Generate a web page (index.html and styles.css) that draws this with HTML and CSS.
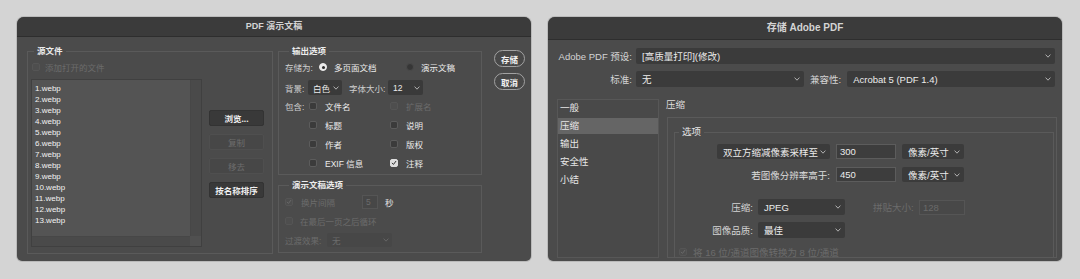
FILE: index.html
```html
<!DOCTYPE html>
<html lang="zh-CN">
<head>
<meta charset="utf-8">
<title>PDF 对话框</title>
<link rel="stylesheet" href="styles.css">
</head>
<body>
<div class="page">

  <section class="dlg">
    <header class="titlebar tb-left">PDF 演示文稿</header>
    <div class="left-body">
      <fieldset class="grp grp-src">
        <legend class="lg lg-src">源文件</legend>
        <div class="src-add dis">
          <span class="cb cb-dis"></span><span>添加打开的文件</span>
        </div>
        <div class="src-main">
          <div class="filelist">
            <ul class="files">
              <li>1.webp</li><li>2.webp</li><li>3.webp</li><li>4.webp</li><li>5.webp</li>
              <li>6.webp</li><li>7.webp</li><li>8.webp</li><li>9.webp</li><li>10.webp</li>
              <li>11.webp</li><li>12.webp</li><li>13.webp</li>
            </ul>
            <div class="vscroll"></div>
            <div class="hscroll"></div>
            <div class="corner"></div>
          </div>
          <div class="btncol">
            <button class="btn">浏览...</button>
            <button class="btn btn-dis">复制</button>
            <button class="btn btn-dis">移去</button>
            <button class="btn">按名称排序</button>
          </div>
        </div>
      </fieldset>

      <div class="optcol">
        <fieldset class="grp grp-out">
          <legend class="lg lg-out">输出选项</legend>
          <div class="r1">
            <span class="olabel w34">存储为:</span>
            <span class="opt w87"><span class="radio on"></span><span class="val">多页面文档</span></span>
            <span class="opt"><span class="radio"></span><span class="val">演示文稿</span></span>
          </div>
          <div class="r2">
            <span class="olabel w23">背景:</span>
            <span class="lsel w34"><span class="val">白色</span><svg class="chev" viewBox="0 0 6 4"><path d="M0.6 0.6 L3 3.2 L5.4 0.6"/></svg></span>
            <span class="olabel w39 ml7">字体大小:</span>
            <span class="lsel w35"><span class="val">12</span><svg class="chev" viewBox="0 0 6 4"><path d="M0.6 0.6 L3 3.2 L5.4 0.6"/></svg></span>
          </div>
          <div class="inc-grid">
            <span class="olabel">包含:</span>
            <span class="ck"><span class="cb"></span><span class="val">文件名</span></span>
            <span class="ck dis"><span class="cb cb-dis"></span><span>扩展名</span></span>
            <span></span>
            <span class="ck"><span class="cb"></span><span class="val">标题</span></span>
            <span class="ck"><span class="cb"></span><span class="val">说明</span></span>
            <span></span>
            <span class="ck"><span class="cb"></span><span class="val">作者</span></span>
            <span class="ck"><span class="cb"></span><span class="val">版权</span></span>
            <span></span>
            <span class="ck"><span class="cb"></span><span class="val">EXIF 信息</span></span>
            <span class="ck"><span class="cb cb-on"><svg viewBox="0 0 8 8"><path d="M1.6 4.2 L3.3 5.9 L6.4 1.8"/></svg></span><span class="val">注释</span></span>
          </div>
        </fieldset>

        <fieldset class="grp grp-pres">
          <legend class="lg lg-out">演示文稿选项</legend>
          <div class="pA dis">
            <span class="cb cb-dis"><svg viewBox="0 0 8 8"><path d="M1.6 4.2 L3.3 5.9 L6.4 1.8"/></svg></span>
            <span class="w61">换片间隔</span>
            <span class="linput">5</span>
            <span class="sec">秒</span>
          </div>
          <div class="pB dis">
            <span class="cb cb-dis"></span><span>在最后一页之后循环</span>
          </div>
          <div class="pC dis">
            <span class="w42">过渡效果:</span>
            <span class="lsel lsel-dis w65"><span>无</span><svg class="chev" viewBox="0 0 6 4"><path d="M0.6 0.6 L3 3.2 L5.4 0.6"/></svg></span>
          </div>
        </fieldset>
      </div>

      <div class="actcol">
        <button class="pill">存储</button>
        <button class="pill">取消</button>
      </div>
    </div>
  </section>

  <section class="dlg">
    <header class="titlebar tb-right">存储 Adobe PDF</header>
    <div class="right-body">
      <div class="frow">
        <span class="flabel">Adobe PDF 预设:</span>
        <span class="sel grow"><span>[高质量打印](修改)</span><svg class="chev" viewBox="0 0 6 4"><path d="M0.6 0.6 L3 3.2 L5.4 0.6"/></svg></span>
      </div>
      <div class="frow">
        <span class="flabel">标准:</span>
        <span class="sel w168"><span>无</span><svg class="chev" viewBox="0 0 6 4"><path d="M0.6 0.6 L3 3.2 L5.4 0.6"/></svg></span>
        <span class="flabel2">兼容性:</span>
        <span class="sel grow"><span>Acrobat 5 (PDF 1.4)</span><svg class="chev" viewBox="0 0 6 4"><path d="M0.6 0.6 L3 3.2 L5.4 0.6"/></svg></span>
      </div>
      <div class="main">
        <nav class="nav">
          <div class="nav-item">一般</div>
          <div class="nav-item on">压缩</div>
          <div class="nav-item">输出</div>
          <div class="nav-item">安全性</div>
          <div class="nav-item">小结</div>
        </nav>
        <div class="panel">
          <div class="panel-title">压缩</div>
          <div class="panel-box">
            <fieldset class="grp grp-opts">
              <legend class="lg lg-opts">选项</legend>
              <div class="res-grid">
                <span class="sel w113 je"><span>双立方缩减像素采样至</span><svg class="chev" viewBox="0 0 6 4"><path d="M0.6 0.6 L3 3.2 L5.4 0.6"/></svg></span>
                <span class="inp">300</span>
                <span class="sel"><span>像素/英寸</span><svg class="chev" viewBox="0 0 6 4"><path d="M0.6 0.6 L3 3.2 L5.4 0.6"/></svg></span>
                <span class="je">若图像分辨率高于:</span>
                <span class="inp">450</span>
                <span class="sel"><span>像素/英寸</span><svg class="chev" viewBox="0 0 6 4"><path d="M0.6 0.6 L3 3.2 L5.4 0.6"/></svg></span>
              </div>
              <div class="crows">
                <div class="crow">
                  <span class="clabel">压缩:</span>
                  <span class="sel w87"><span>JPEG</span><svg class="chev" viewBox="0 0 6 4"><path d="M0.6 0.6 L3 3.2 L5.4 0.6"/></svg></span>
                  <span class="tlabel dis">拼贴大小:</span>
                  <span class="inp inp-dis w46">128</span>
                </div>
                <div class="crow">
                  <span class="clabel">图像品质:</span>
                  <span class="sel w87"><span>最佳</span><svg class="chev" viewBox="0 0 6 4"><path d="M0.6 0.6 L3 3.2 L5.4 0.6"/></svg></span>
                </div>
              </div>
              <div class="conv dis">
                <span class="cb cb-dis"><svg viewBox="0 0 8 8"><path d="M1.6 4.2 L3.3 5.9 L6.4 1.8"/></svg></span>
                <span>将 16 位/通道图像转换为 8 位/通道</span>
              </div>
            </fieldset>
          </div>
        </div>
      </div>
    </div>
  </section>

</div>
</body>
</html>
```

FILE: styles.css
```css
* { box-sizing: border-box; }
html, body { margin: 0; padding: 0; }
body {
  width: 1080px;
  height: 279px;
  overflow: hidden;
  background: #d4d4d4;
  font-family: "Liberation Sans", "Noto Sans CJK SC", sans-serif;
  color: #dcdcdc;
}
.page { display: flex; gap: 17px; padding: 17px 0 0 17px; }

.dlg {
  width: 514px;
  height: 244px;
  background: #4b4b4b;
  border-radius: 7px 7px 5px 5px;
  overflow: hidden;
  display: flex;
  flex-direction: column;
  box-shadow: 0 0 0 1px rgba(0,0,0,0.12);
}
.titlebar {
  flex: none;
  background: #3b3b3b;
  border-bottom: 1px solid #2e2e2e;
  color: #d4d4d4;
  font-weight: bold;
  text-align: center;
}
.tb-left { height: 20px; line-height: 19px; font-size: 9px; }
.tb-right { height: 23px; line-height: 22px; font-size: 10px; }

button { font-family: inherit; margin: 0; padding: 0; }

/* shared */
.grp { margin: 0; padding: 0; border: 1px solid #5a5a5a; min-width: 0; }
.lg { font-weight: bold; color: #ececec; line-height: 12px; padding: 0 3px; }
.dis { color: #6c6c6c; }
.val { color: #ececec; }
.cb {
  flex: none;
  width: 8px; height: 8px;
  border-radius: 2px;
  background: #3b3b3b;
  border: 1px solid #5c5c5c;
  display: flex; align-items: center; justify-content: center;
}
.cb svg { width: 8px; height: 8px; fill: none; stroke-width: 1.3; stroke-linecap: round; stroke-linejoin: round; }
.cb-on { background: #dedede; border-color: #dedede; }
.cb-on svg { stroke: #2a2a2a; }
.cb-dis { background: #4e4e4e; border-color: #555; }
.cb-dis svg { stroke: #6a6a6a; }
.chev { flex: none; width: 6px; height: 4px; fill: none; stroke: #b0b0b0; stroke-width: 1; }

/* ---------- left dialog ---------- */
.left-body {
  display: flex;
  padding: 8px 6px 0 10px;
  font-size: 8.5px;
}
.grp-src { width: 246px; height: 209px; flex: none; }
.lg-src { margin-left: 6px; }
.lg-out { margin-left: 10px; }

.src-add { display: flex; align-items: center; gap: 5px; height: 12px; margin-top: 4px; padding-left: 4px; }
.src-main { display: flex; margin-top: 6px; padding-left: 3px; }
.filelist {
  width: 171px; height: 168px;
  border: 1px solid #404040;
  display: grid;
  grid-template-columns: 1fr 11px;
  grid-template-rows: 1fr 10px;
}
.files {
  list-style: none; margin: 0;
  padding: 3px 0 0 3px;
  background: #545454;
  font-size: 8px; line-height: 11px;
  color: #f2f2f2;
}
.vscroll { background: #4a4a4a; border-left: 1px solid #474747; }
.hscroll { background: #4a4a4a; border-top: 1px solid #474747; }
.corner { background: #505050; }

.btncol { display: flex; flex-direction: column; gap: 8px; width: 55px; margin-left: 7px; padding-top: 31px; }
.btn {
  height: 16px;
  font-size: 8.5px;
  font-weight: bold;
  background: #393939;
  border: 1px solid #333;
  border-radius: 2px;
  color: #efefef;
}
.btn-dis { background: #474747; border-color: #4f4f4f; color: #6d6d6d; font-weight: normal; }

.optcol { display: flex; flex-direction: column; width: 204px; margin-left: 5px; flex: none; }
.grp-out { height: 130px; }
.grp-pres { height: 74px; margin-top: 4px; }
.olabel { color: #cfcfcf; flex: none; }
.w23 { width: 23px; } .w34 { width: 34px; } .w35 { width: 35px; } .w39 { width: 39px; }
.w42 { width: 42px; flex: none; } .w61 { width: 61px; flex: none; } .w65 { width: 65px; }
.w87 { width: 87px; flex: none; } .ml7 { margin-left: 7px; }

.r1 { display: flex; align-items: center; height: 14px; margin-top: 3px; padding-left: 6px; }
.opt { display: flex; align-items: center; gap: 7px; }
.radio {
  flex: none;
  width: 8px; height: 8px; border-radius: 50%;
  background: #363636; border: 1px solid #4a4a4a;
  display: flex; align-items: center; justify-content: center;
}
.radio.on { background: #ececec; border-color: #ececec; }
.radio.on::after { content: ""; width: 3px; height: 3px; border-radius: 50%; background: #2c2c2c; }

.r2 { display: flex; align-items: center; height: 15px; margin-top: 6px; padding-left: 6px; }
.lsel {
  flex: none;
  height: 15px;
  display: flex; align-items: center; justify-content: space-between;
  padding: 0 3px 0 5px;
  background: #3a3a3a;
  border-radius: 2px;
}
.lsel-dis { background: #474747; height: 14px; color: #6c6c6c; }
.lsel-dis .chev { stroke: #666; }

.inc-grid {
  display: grid;
  grid-template-columns: 24px 81px 1fr;
  grid-auto-rows: 19px;
  align-items: center;
  margin-top: 1px;
  padding-left: 6px;
}
.ck { display: flex; align-items: center; gap: 8px; }

.pA { display: flex; align-items: center; height: 16px; margin-top: 3px; padding-left: 6px; gap: 8px; }
.pA .w61 { margin-left: 0; }
.pA { gap: 0; }
.pA .cb { margin-right: 8px; }
.linput {
  width: 16px; height: 14px;
  background: #474747; border: 1px solid #555;
  color: #6c6c6c; padding-left: 3px; line-height: 12px;
}
.sec { margin-left: 7px; color: #e6e6e6; }
.pB { display: flex; align-items: center; gap: 7px; height: 18px; margin-top: 2px; padding-left: 6px; }
.pC { display: flex; align-items: center; height: 14px; margin-top: 3px; padding-left: 6px; }

.actcol { display: flex; flex-direction: column; gap: 6px; width: 31px; margin-left: 12px; padding-top: 5px; flex: none; }
.pill {
  height: 17px;
  border: 1px solid #a2a2a2;
  border-radius: 9px;
  background: #484848;
  color: #f2f2f2;
  font-size: 8.5px;
  font-weight: bold;
}

/* ---------- right dialog ---------- */
.right-body {
  flex: 1; min-height: 0;
  display: flex; flex-direction: column;
  padding: 8px 7px 0 9px;
  font-size: 9.5px;
}
.frow { display: flex; align-items: center; height: 16px; flex: none; }
.frow + .frow { margin-top: 7px; }
.flabel { width: 75px; text-align: right; margin-right: 4px; flex: none; color: #d4d4d4; }
.flabel2 { margin: 0 6px; color: #d4d4d4; }
.sel {
  height: 16px;
  display: flex; align-items: center; justify-content: space-between;
  padding: 0 4px 0 6px;
  background: #3b3b3b;
  border-radius: 2px;
  color: #ececec;
}
.grow { flex: 1; }
.w168 { width: 168px; flex: none; }
.w113 { width: 113px; }

.main { display: flex; flex: 1; min-height: 0; margin: 12px -2px 0 0; padding-bottom: 3px; }
.nav { width: 102px; flex: none; border: 1px solid #575757; background: #494949; }
.nav-item { height: 16px; line-height: 16px; padding-left: 2px; margin-bottom: 2px; color: #e6e6e6; }
.nav-item.on { background: #656565; }
.panel { flex: 1; margin-left: 8px; display: flex; flex-direction: column; min-width: 0; }
.panel-title { height: 18px; line-height: 12px; margin-left: -1px; color: #dedede; flex: none; }
.panel-box { flex: 1; min-height: 0; border: 1px solid #5a5a5a; padding: 8px 2px 0 6px; overflow: hidden; }
.grp-opts { height: 160px; }
.lg-opts { margin-left: 4px; font-weight: normal; color: #e6e6e6; }

.res-grid {
  display: grid;
  grid-template-columns: 155px 60px 62px;
  grid-auto-rows: 15px;
  column-gap: 6px;
  row-gap: 8px;
  align-items: center;
  margin-top: 6px;
}
.res-grid .sel { height: 15px; }
.je { justify-self: end; }
.inp {
  height: 15px;
  background: #3d3d3d;
  border: 1px solid #5c5c5c;
  color: #ececec;
  padding-left: 3px;
  line-height: 13px;
}
.inp-dis { background: #484848; border-color: #555; color: #6a6a6a; }
.w46 { width: 46px; height: 15px; }

.crows { margin-top: 17px; }
.crow { display: flex; align-items: center; height: 16px; }
.crow + .crow { margin-top: 7px; }
.clabel { width: 78px; text-align: right; margin-right: 5px; flex: none; color: #d4d4d4; }
.tlabel { margin-left: 28px; width: 42px; margin-right: 4px; flex: none; }

.conv { display: flex; align-items: center; gap: 6px; height: 12px; margin-top: 8px; padding-left: 4px; }
```
